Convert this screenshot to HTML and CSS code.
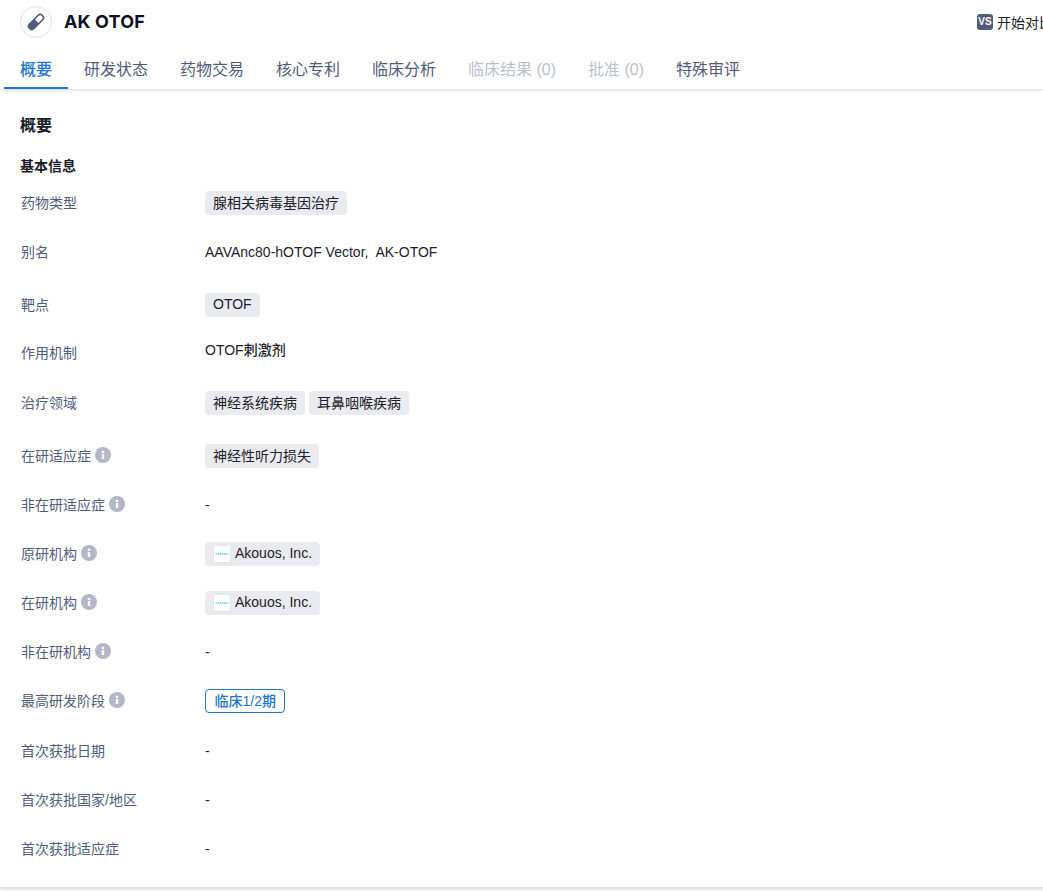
FILE: index.html
```html
<!DOCTYPE html>
<html lang="zh">
<head>
<meta charset="utf-8">
<title>AK OTOF</title>
<link rel="stylesheet" href="styles.css">
</head>
<body>
<div class="page">
  <header class="header">
    <div class="head-top">
      <span class="avatar">
        <svg width="20" height="20" viewBox="0 0 20 20"><g transform="rotate(45 10 10)"><rect x="6" y="0" width="8" height="20" rx="4" fill="#505c7a"/><path d="M7.6 9V4a2.4 2.4 0 0 1 4.8 0v5z" fill="#fff"/></g></svg>
      </span>
      <h1 class="title">AK OTOF</h1>
      <div class="compare"><span class="vs">VS</span><span>开始对比</span></div>
    </div>
    <nav class="tabs">
      <a class="tab tab-active">概要</a>
      <a class="tab">研发状态</a>
      <a class="tab">药物交易</a>
      <a class="tab">核心专利</a>
      <a class="tab">临床分析</a>
      <a class="tab tab-off">临床结果 (0)</a>
      <a class="tab tab-off">批准 (0)</a>
      <a class="tab">特殊审评</a>
    </nav>
  </header>
  <main class="card">
    <h2 class="h2">概要</h2>
    <h3 class="h3">基本信息</h3>
    <div class="row"><div class="label">药物类型</div><div class="value"><span class="tag">腺相关病毒基因治疗</span></div></div>
    <div class="row"><div class="label">别名</div><div class="value">AAVAnc80-hOTOF Vector,&nbsp; AK-OTOF</div></div>
    <div class="row gap4"><div class="label">靶点</div><div class="value"><span class="tag">OTOF</span></div></div>
    <div class="row short"><div class="label">作用机制</div><div class="value value-up">OTOF刺激剂</div></div>
    <div class="row gap1"><div class="label">治疗领域</div><div class="value"><span class="tag">神经系统疾病</span><span class="tag">耳鼻咽喉疾病</span></div></div>
    <div class="row gap4"><div class="label">在研适应症<svg class="info" viewBox="0 0 16 16"><circle cx="8" cy="8" r="8" fill="#b2b8c8"/><rect x="6.8" y="7" width="2.4" height="5" fill="#fff"/><rect x="6.8" y="3.8" width="2.4" height="2.2" fill="#fff"/></svg></div><div class="value"><span class="tag">神经性听力损失</span></div></div>
    <div class="row short gap1"><div class="label">非在研适应症<svg class="info" viewBox="0 0 16 16"><circle cx="8" cy="8" r="8" fill="#b2b8c8"/><rect x="6.8" y="7" width="2.4" height="5" fill="#fff"/><rect x="6.8" y="3.8" width="2.4" height="2.2" fill="#fff"/></svg></div><div class="value">-</div></div>
    <div class="row"><div class="label">原研机构<svg class="info" viewBox="0 0 16 16"><circle cx="8" cy="8" r="8" fill="#b2b8c8"/><rect x="6.8" y="7" width="2.4" height="5" fill="#fff"/><rect x="6.8" y="3.8" width="2.4" height="2.2" fill="#fff"/></svg></div><div class="value"><span class="tag tag-org"><svg class="logo" viewBox="0 0 18 18"><rect x=".5" y=".5" width="17" height="17" rx="2.5" fill="#fff" stroke="#e3e5eb"/><line x1="2.5" y1="9" x2="15.5" y2="9" stroke="#8fe0da" stroke-width="2" stroke-dasharray="1.5 .6"/></svg>Akouos, Inc.</span></div></div>
    <div class="row"><div class="label">在研机构<svg class="info" viewBox="0 0 16 16"><circle cx="8" cy="8" r="8" fill="#b2b8c8"/><rect x="6.8" y="7" width="2.4" height="5" fill="#fff"/><rect x="6.8" y="3.8" width="2.4" height="2.2" fill="#fff"/></svg></div><div class="value"><span class="tag tag-org"><svg class="logo" viewBox="0 0 18 18"><rect x=".5" y=".5" width="17" height="17" rx="2.5" fill="#fff" stroke="#e3e5eb"/><line x1="2.5" y1="9" x2="15.5" y2="9" stroke="#8fe0da" stroke-width="2" stroke-dasharray="1.5 .6"/></svg>Akouos, Inc.</span></div></div>
    <div class="row"><div class="label">非在研机构<svg class="info" viewBox="0 0 16 16"><circle cx="8" cy="8" r="8" fill="#b2b8c8"/><rect x="6.8" y="7" width="2.4" height="5" fill="#fff"/><rect x="6.8" y="3.8" width="2.4" height="2.2" fill="#fff"/></svg></div><div class="value">-</div></div>
    <div class="row"><div class="label">最高研发阶段<svg class="info" viewBox="0 0 16 16"><circle cx="8" cy="8" r="8" fill="#b2b8c8"/><rect x="6.8" y="7" width="2.4" height="5" fill="#fff"/><rect x="6.8" y="3.8" width="2.4" height="2.2" fill="#fff"/></svg></div><div class="value"><span class="stage">临床1/2期</span></div></div>
    <div class="row gap1"><div class="label">首次获批日期</div><div class="value">-</div></div>
    <div class="row"><div class="label">首次获批国家/地区</div><div class="value">-</div></div>
    <div class="row"><div class="label">首次获批适应症</div><div class="value">-</div></div>
  </main>
</div>
</body>
</html>
```
FILE: styles.css
```css
* { box-sizing: border-box; }
html, body { margin: 0; padding: 0; }
body {
  font-family: "Liberation Sans", "Noto Sans CJK SC", sans-serif;
  font-size: 14px;
  color: #1d2129;
  background: #f6f6f7;
  overflow: hidden;
}
.page { width: 1043px; height: 891px; overflow: hidden; }
.header {
  background: #fff;
  height: 89px;
  box-shadow: 0 1px 3px rgba(60, 70, 90, .25);
  position: relative;
}
.head-top {
  height: 44px;
  padding-left: 20px;
  display: flex;
  align-items: center;
  white-space: nowrap;
}
.avatar {
  width: 32px;
  height: 32px;
  border: 1px solid #e1e3ea;
  border-radius: 50%;
  display: flex;
  align-items: center;
  justify-content: center;
  flex: none;
}
.title {
  margin: 0 0 0 12px;
  font: 700 18px/24px Inter, "Liberation Sans", sans-serif;
  letter-spacing: .15px;
  color: #0d1220;
}
.compare {
  margin-left: auto;
  display: flex;
  align-items: center;
  gap: 4px;
  width: 66px;
  flex: none;
  overflow: hidden;
}
.vs {
  width: 16px;
  height: 16px;
  flex: none;
  border-radius: 3px;
  background: #505c7a;
  color: #fff;
  font: 700 10px/16px "Liberation Sans", sans-serif;
  text-align: center;
}
.tabs { display: flex; padding-left: 4px; height: 45px; }
.tab {
  padding: 0 16px;
  font-size: 16px;
  line-height: 51px;
  height: 45px;
  color: #505c7a;
  white-space: nowrap;
}
.tab-active { color: #1c76d4; border-bottom: 2px solid #1c76d4; font-weight: 500; }
.tab-off { color: #bcc1cd; }
.card {
  background: #fff;
  height: 799px;
  padding: 0 20px;
  border-bottom: 1px solid #dcdde1;
  box-shadow: 0 1px 2px rgba(60, 70, 90, .15);
}
.h2 { margin: 0; padding-top: 27px; font-size: 16px; line-height: 20px; font-weight: 700; color: #161b27; }
.h3 { margin: 0 0 2px; padding-top: 20px; font-size: 14px; line-height: 20px; font-weight: 700; color: #161b27; }
.row { display: flex; align-items: center; height: 49px; }
.short { height: 48px; }
.gap1 { margin-top: 1px; }
.gap4 { margin-top: 4px; }
.label {
  width: 184px;
  margin-left: 1px;
  padding-bottom: 2px;
  flex: none;
  color: #505c7a;
  display: flex;
  align-items: center;
  gap: 4px;
  white-space: nowrap;
}
.info { width: 16px; height: 16px; flex: none; }
.value { display: flex; gap: 4px; color: #1d2129; white-space: nowrap; }
.value-up { transform: translateY(-4px); font-weight: 500; }
.tag {
  display: inline-flex;
  align-items: center;
  height: 24px;
  padding: 0 8px 2px;
  background: #e9ebf0;
  border-radius: 4px;
}
.tag-org { gap: 4px; }
.logo { width: 18px; height: 18px; flex: none; margin-bottom: -2px; }
.stage {
  display: inline-flex;
  align-items: center;
  height: 24px;
  padding: 0 8.5px 2px;
  border: 1px solid #1c76d4;
  border-radius: 4px;
  color: #1c76d4;
  font-weight: 500;
}
```
